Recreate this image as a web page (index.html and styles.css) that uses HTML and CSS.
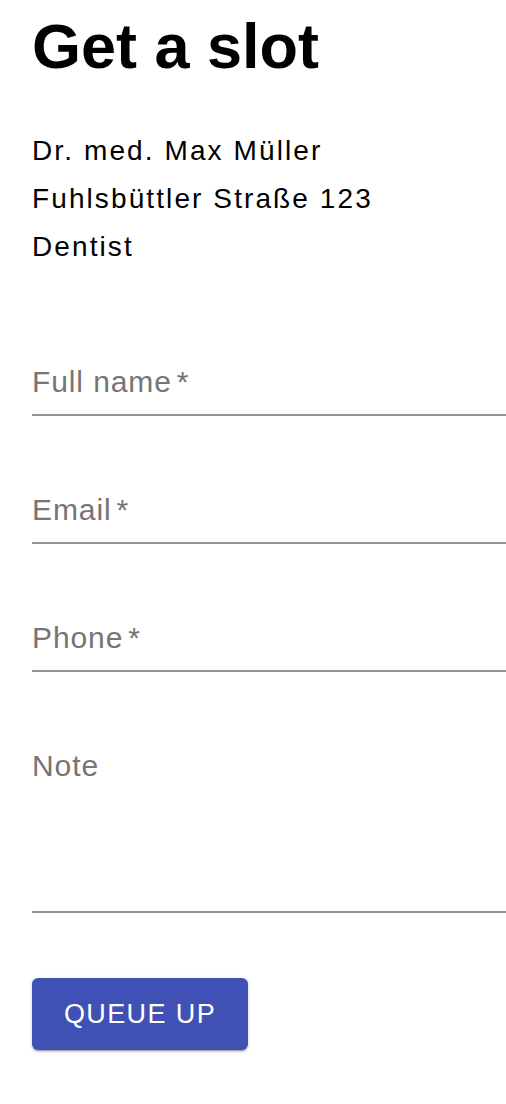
FILE: index.html
```html
<!DOCTYPE html>
<html lang="en">
<head>
    <meta charset="UTF-8">
    <meta name="viewport" content="width=device-width, initial-scale=1.0">
    <title>Get a slot</title>
    <link rel="stylesheet" href="styles.css">
</head>
<body>
    <div class="page">
        <h1>Get a slot</h1>
        <div class="doctor">
            <div>Dr. med. Max Müller</div>
            <div>Fuhlsbüttler Straße 123</div>
            <div>Dentist</div>
        </div>

        <form class="slot-form">
            <label class="field">
                <span class="field-label">Full name<span class="required">*</span></span>
            </label>
            <label class="field">
                <span class="field-label">Email<span class="required">*</span></span>
            </label>
            <label class="field">
                <span class="field-label">Phone<span class="required">*</span></span>
            </label>
            <label class="field field-multiline">
                <span class="field-label">Note</span>
            </label>
            <button type="button" class="queue-btn">Queue up</button>
        </form>
    </div>
</body>
</html>
```
FILE: styles.css
```css
body {
    margin: 0;
    padding: 0;
    font-family: 'Liberation Sans', Arial, sans-serif;
    color: #000;
    background: #fff;
    overflow-x: hidden;
}
.page {
    padding: 15px 0 40px 32px;
}
h1 {
    margin: 0;
    font-size: 63px;
    line-height: 63px;
    font-weight: bold;
}
.doctor {
    margin-top: 49px;
    font-size: 28px;
    line-height: 48px;
    letter-spacing: 2.1px;
}
.slot-form {
    display: flex;
    flex-direction: column;
    align-items: flex-start;
    gap: 76px;
    margin-top: 93px;
}
.field {
    display: block;
    align-self: stretch;
    padding-bottom: 14px;
    border-bottom: 2px solid #949494;
}
.field-multiline {
    padding-bottom: 127px;
}
.field-label {
    display: block;
    font-size: 30px;
    line-height: 36px;
    letter-spacing: 0.9px;
    color: #757575;
}
.required {
    margin-left: 5px;
}
.queue-btn {
    margin-top: -11px;
    width: 216px;
    height: 72px;
    border: none;
    border-radius: 6px;
    background-color: #3f51b5;
    color: #fff;
    font-family: 'Liberation Sans', Arial, sans-serif;
    font-size: 27px;
    letter-spacing: 1.4px;
    text-transform: uppercase;
    box-shadow: 0 3px 1px -2px rgba(0, 0, 0, 0.2), 0 2px 2px 0 rgba(0, 0, 0, 0.14), 0 1px 5px 0 rgba(0, 0, 0, 0.12);
    cursor: pointer;
}
```
